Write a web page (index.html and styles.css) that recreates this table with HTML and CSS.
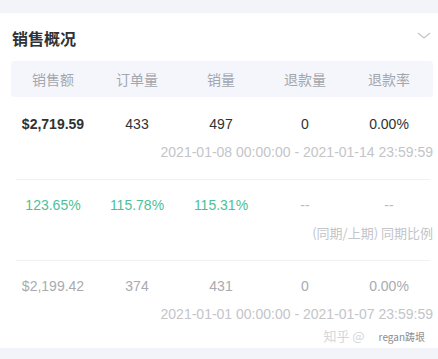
FILE: index.html
```html
<!DOCTYPE html>
<html lang="zh">
<head>
<meta charset="utf-8">
<link rel="stylesheet" href="styles.css">
</head>
<body>
<div class="card">
  <div class="title-row">
    <div class="title">销售概况</div>
    <svg class="chev" width="14" height="7" viewBox="0 0 14 7"><polyline points="1,1 7,6 13,1" fill="none" stroke="#c4c7cc" stroke-width="1.3"/></svg>
  </div>
  <div class="head grid">
    <div>销售额</div><div>订单量</div><div>销量</div><div>退款量</div><div>退款率</div>
  </div>
  <div class="block first">
    <div class="grid row dark">
      <div class="strong">$2,719.59</div><div>433</div><div>497</div><div>0</div><div>0.00%</div>
    </div>
    <div class="note">2021-01-08 00:00:00 - 2021-01-14 23:59:59</div>
  </div>
  <div class="divider"></div>
  <div class="block">
    <div class="grid row green">
      <div>123.65%</div><div>115.78%</div><div>115.31%</div><div class="dash">--</div><div class="dash">--</div>
    </div>
    <div class="note cn">(同期/上期) 同期比例</div>
  </div>
  <div class="divider"></div>
  <div class="block last">
    <div class="grid row gray">
      <div>$2,199.42</div><div>374</div><div>431</div><div>0</div><div>0.00%</div>
    </div>
    <div class="note">2021-01-01 00:00:00 - 2021-01-07 23:59:59</div>
    <div class="mark"><span class="zh">知乎 @</span><span class="who">regan踌垠</span></div>
  </div>
</div>
</body>
</html>
```
FILE: styles.css
```css
html, body {
  margin: 0;
  padding: 0;
}
body {
  background: #f2f4f9;
  font-family: "Liberation Sans", "Noto Sans CJK SC", sans-serif;
  font-size: 14px;
  width: 438px;
  height: 359px;
  overflow: hidden;
}
.card {
  margin-top: 13px;
  height: 335px;
  background: #fff;
  padding: 0 5px 0 11px;
  box-sizing: border-box;
}
.title-row {
  height: 48px;
  padding-top: 2px;
  box-sizing: border-box;
  display: flex;
  align-items: center;
  justify-content: space-between;
}
.title {
  font-family: "Noto Sans CJK SC", sans-serif;
  font-size: 16px;
  font-weight: 700;
  color: #303133;
  padding-left: 1px;
}
.chev {
  margin-right: 2px;
  margin-top: -6px;
}
.grid {
  display: grid;
  grid-template-columns: repeat(5, 84px);
  text-align: center;
}
.head {
  height: 36px;
  align-items: center;
  background: #f4f6fc;
  border-radius: 4px;
  color: #a3a6ad;
  font-family: "Noto Sans CJK SC", sans-serif;
  font-size: 14px;
}
.block {
  padding: 12px 0 12px;
}
.block.first {
  padding-top: 14px;
}
.block.last {
  padding-bottom: 0;
}
.row {
  line-height: 26px;
}
.dark {
  color: #303133;
}
.strong {
  font-weight: 700;
}
.green {
  color: #4dbf98;
}
.dash {
  color: #b8bbc0;
}
.gray {
  color: #a9abaf;
}
.note {
  text-align: right;
  line-height: 30px;
  color: #c3c5c9;
}
.note.cn {
  font-family: "Noto Sans CJK SC", sans-serif;
  font-size: 13px;
}
.divider {
  height: 1px;
  background: #f0f1f4;
  margin: 0 3px 0 5px;
}
.mark {
  text-align: right;
  line-height: 12px;
  padding-right: 8px;
  font-family: "Noto Sans CJK SC", sans-serif;
}
.mark .zh {
  color: #d4d6da;
  font-size: 13px;
}
.mark .who {
  color: #8a8c90;
  font-size: 10px;
  margin-left: 14px;
}
```
